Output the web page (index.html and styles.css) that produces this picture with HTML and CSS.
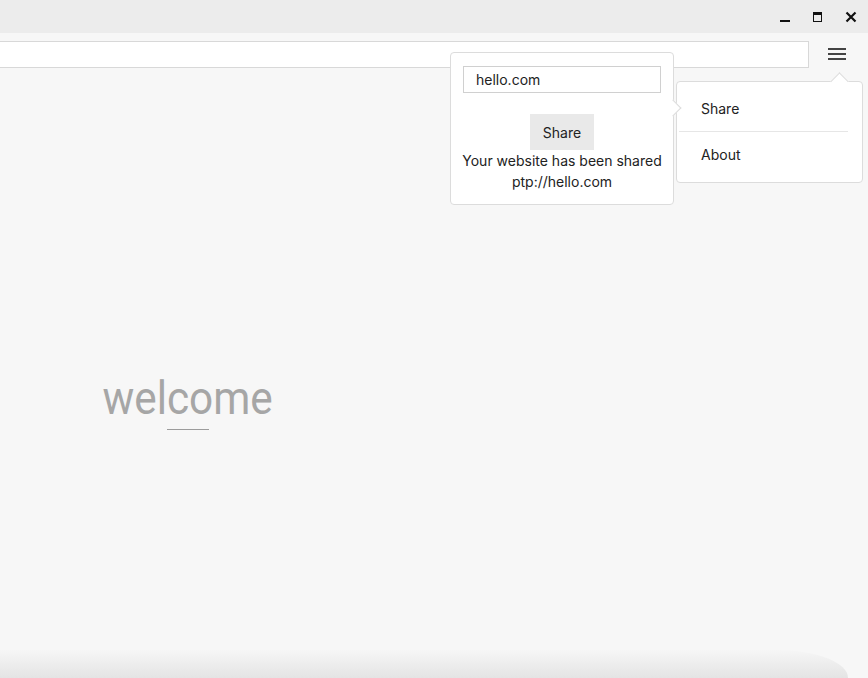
FILE: index.html
```html
<!DOCTYPE html>
<html lang="en">
<head>
    <meta charset="UTF-8">
    <title>Browser</title>
    <link rel="stylesheet" href="styles.css">
</head>
<body>
<div class="titlebar">
    <span class="win-btn win-min"></span>
    <span class="win-btn win-max"></span>
    <span class="win-btn win-close">
        <svg width="12" height="12" viewBox="0 0 12 12"><path d="M1.5 1.5 L10.5 10.5 M10.5 1.5 L1.5 10.5" stroke="#111" stroke-width="2.2"/></svg>
    </span>
</div>
<div class="toolbar">
    <input class="address" type="text">
    <button class="menu-btn">
        <svg width="18" height="14" viewBox="0 0 18 14"><path d="M0 2 H18 M0 7 H18 M0 12 H18" stroke="#444" stroke-width="2"/></svg>
    </button>
</div>
<div class="main">
    <div class="welcome">
        <h1>welcome</h1>
        <div class="underline"></div>
    </div>
</div>
<div class="footer"></div>

<div class="popover">
    <input class="share-input" type="text" value="hello.com">
    <button class="share-btn">Share</button>
    <p class="share-msg">Your website has been shared<br>ptp://hello.com</p>
</div>

<div class="menu">
    <div class="menu-item">Share</div>
    <div class="menu-item">About</div>
</div>
</body>
</html>
```

FILE: styles.css
```css
body {
    margin: 0;
    width: 868px;
    height: 678px;
    overflow: hidden;
    display: flex;
    flex-direction: column;
    background-color: #f7f7f7;
    font-family: Inter, 'Noto Sans', Arial, sans-serif;
    font-size: 14px;
    color: #222;
    position: relative;
}

.titlebar {
    height: 33px;
    background-color: #ececec;
    display: flex;
    justify-content: flex-end;
    align-items: center;
    padding-right: 1px;
}

.win-btn {
    width: 33px;
    height: 20px;
    display: flex;
    justify-content: center;
    align-items: center;
}

.win-min::after {
    content: '';
    width: 10px;
    height: 2px;
    background-color: #111;
    margin-top: 8px;
}

.win-max::after {
    content: '';
    width: 7px;
    height: 6px;
    border: 1.5px solid #111;
    border-top-width: 3px;
}

.toolbar {
    height: 42px;
    display: flex;
    align-items: flex-start;
    padding-top: 8px;
    box-sizing: border-box;
}

.address {
    margin-left: -2px;
    width: 811px;
    height: 27px;
    box-sizing: border-box;
    border: 1px solid #d8d8d8;
    background-color: #fff;
    outline: none;
}

.menu-btn {
    margin-left: 19px;
    margin-top: 6px;
    padding: 0;
    border: none;
    background: transparent;
    width: 18px;
    height: 14px;
}

.main {
    flex: 1;
    padding-left: 95px;
    padding-top: 298px;
}

.welcome {
    display: inline-flex;
    flex-direction: column;
    align-items: center;
}

h1 {
    margin: 0;
    font-family: Roboto, sans-serif;
    font-weight: 400;
    font-size: 46px;
    line-height: 50px;
    color: #a6a6a6;
    transform: scaleX(0.92);
}

.underline {
    width: 42px;
    height: 1px;
    background-color: #9c9c9c;
    margin-top: 6px;
}

.footer {
    height: 28px;
    margin-right: 20px;
    border-top-right-radius: 70px 28px;
    background: linear-gradient(to bottom, #f6f6f6, #e4e4e4);
}

.popover {
    position: absolute;
    left: 450px;
    top: 52px;
    width: 224px;
    height: 153px;
    box-sizing: border-box;
    background-color: #fff;
    border: 1px solid #dcdcdc;
    border-radius: 4px;
    padding: 13px 13px 0;
    display: flex;
    flex-direction: column;
    align-items: center;
    z-index: 2;
}

.popover::after {
    content: '';
    position: absolute;
    right: -6px;
    top: 49px;
    width: 11px;
    height: 11px;
    background-color: #fff;
    border-top: 1px solid #dcdcdc;
    border-right: 1px solid #dcdcdc;
    transform: rotate(45deg);
}

.share-input {
    width: 198px;
    height: 27px;
    box-sizing: border-box;
    border: 1px solid #d0d0d0;
    padding: 0 12px;
    font-family: inherit;
    font-size: 14px;
    color: #222;
    outline: none;
}

.share-btn {
    margin-top: 21px;
    width: 64px;
    height: 36px;
    border: none;
    background-color: #e9e9e9;
    font-family: inherit;
    font-size: 14px;
    color: #222;
    padding: 0;
}

.share-msg {
    margin: 0;
    text-align: center;
    line-height: 21px;
    white-space: nowrap;
}

.menu {
    position: absolute;
    left: 676px;
    top: 81px;
    width: 187px;
    height: 102px;
    box-sizing: border-box;
    background-color: #fff;
    border: 1px solid #dcdcdc;
    border-radius: 4px;
    padding: 4px 14px 0 2px;
    z-index: 1;
}

.menu::before {
    content: '';
    position: absolute;
    left: 156px;
    top: -7px;
    width: 12px;
    height: 12px;
    background-color: #fff;
    border-top: 1px solid #dcdcdc;
    border-left: 1px solid #dcdcdc;
    transform: rotate(45deg);
}

.menu-item {
    height: 45px;
    line-height: 45px;
    padding-left: 22px;
}

.menu-item + .menu-item {
    border-top: 1px solid #e6e6e6;
}
```
